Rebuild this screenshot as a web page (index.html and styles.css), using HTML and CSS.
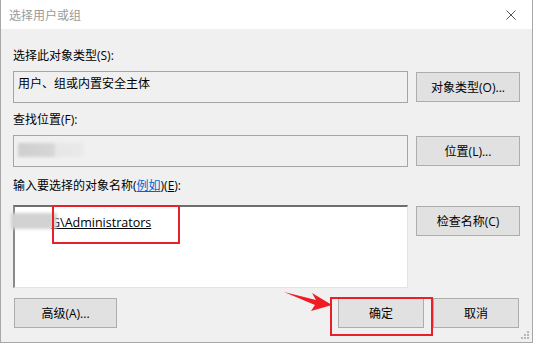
FILE: index.html
```html
<!DOCTYPE html>
<html lang="zh-CN">
<head>
    <meta charset="UTF-8">
    <title>选择用户或组</title>
    <link rel="stylesheet" href="styles.css">
</head>
<body>
    <div class="window">
        <div class="titlebar">
            <span class="title">选择用户或组</span>
            <svg class="close" width="10" height="10" viewBox="0 0 10 10">
                <path d="M0.5 0.5 L9.5 9.5 M9.5 0.5 L0.5 9.5" stroke="#555" stroke-width="1" fill="none"/>
            </svg>
        </div>

        <div class="content">
            <div class="label first">选择此对象类型(S):</div>
            <div class="row">
                <div class="field">用户、组或内置安全主体</div>
                <button class="btn">对象类型(O)...</button>
            </div>

            <div class="label second">查找位置(F):</div>
            <div class="row">
                <div class="field"><span class="blur-box"></span></div>
                <button class="btn">位置(L)...</button>
            </div>

            <div class="label third">输入要选择的对象名称(<a class="link">例如</a>)(<u>E</u>):</div>
            <div class="row top">
                <div class="names">
                    <span class="names-text">G\Administrators</span>
                </div>
                <button class="btn">检查名称(C)</button>
            </div>

            <div class="footer">
                <button class="btn">高级(A)...</button>
                <div class="footer-right">
                    <button class="btn small">确定</button>
                    <button class="btn small">取消</button>
                </div>
            </div>
        </div>

        <span class="blur-name"></span>
        <span class="mark mark-name"></span>
        <span class="mark mark-ok"></span>
        <svg class="arrow" width="52" height="22" viewBox="0 0 52 22">
            <path d="M0 2 L32 10 L28 3 L48 15 L27 21 L31 15 Z" fill="#ee1c25"/>
        </svg>
        <div class="grip">
            <i></i><i></i><i></i><i></i><i></i><i></i>
        </div>
    </div>
</body>
</html>
```

FILE: styles.css
```css
* {
    margin: 0;
    padding: 0;
    box-sizing: border-box;
}

body {
    font-family: "Open Sans", "Noto Sans CJK SC", sans-serif;
    font-size: 12px;
    color: #000;
    background: #fff;
}

.window {
    position: relative;
    width: 533px;
    height: 343px;
    border: 1px solid #a8a8a8;
    border-top: none;
    background: #f0f0f0;
    display: flex;
    flex-direction: column;
    overflow: hidden;
}

.titlebar {
    height: 29px;
    background: #fff;
    display: flex;
    align-items: center;
    justify-content: space-between;
    padding: 0 16px 0 8px;
}

.title {
    color: #9a9a9a;
    font-size: 12px;
}

.content {
    padding: 0 12px;
    display: flex;
    flex-direction: column;
}

.label {
    height: 16px;
    line-height: 16px;
}

.label.first {
    margin-top: 19px;
    margin-bottom: 7px;
}

.label.second {
    margin-top: 9px;
    margin-bottom: 7px;
}

.label.third {
    margin-top: 11px;
    margin-bottom: 11px;
}

.link {
    color: #0066cc;
    text-decoration: underline;
}

.row {
    display: flex;
    align-items: center;
    gap: 8px;
}

.row.top {
    align-items: flex-start;
}

.field {
    flex: 1;
    height: 32px;
    border: 1px solid #a5a5a5;
    background: #f0f0f0;
    padding: 4px 4px;
    line-height: 16px;
}

.blur-box {
    display: block;
    width: 66px;
    height: 14px;
    margin-top: 3px;
    background: linear-gradient(90deg, #cfcfcf 0, #d6d6d6 55%, #e6e6e6 56%, #eaeaea 100%);
    filter: blur(1.5px);
}

.names {
    flex: 1;
    height: 83px;
    background: #fff;
    border-top: 2px solid #6e6e6e;
    border-left: 2px solid #8a8a8a;
    border-right: 1px solid #e3e3e3;
    border-bottom: 1px solid #e3e3e3;
    padding: 8px 0 0 36px;
    line-height: 16px;
    margin-bottom: 10px;
}

.names-text {
    font-size: 12.5px;
    text-decoration: underline;
}

.btn {
    width: 104px;
    height: 30px;
    background: #e1e1e1;
    border: 1px solid #adadad;
    font-family: inherit;
    font-size: 12px;
    color: #000;
}

.row.top .btn {
    margin-top: 1px;
}

.footer {
    display: flex;
    justify-content: space-between;
    align-items: center;
    padding-left: 1px;
    padding-right: 1px;
}

.footer .btn {
    width: 103px;
}

.footer-right {
    display: flex;
    gap: 9px;
}

.footer .btn.small {
    width: 86px;
}

/* overlays */
.blur-name {
    position: absolute;
    left: 10px;
    top: 213px;
    width: 46px;
    height: 16px;
    background: #d2d2d2;
    filter: blur(1.5px);
}

.mark {
    position: absolute;
    border: 2px solid #e8202a;
}

.mark-name {
    left: 51px;
    top: 205px;
    width: 128px;
    height: 39px;
}

.mark-ok {
    left: 329px;
    top: 297px;
    width: 103px;
    height: 39px;
}

.arrow {
    position: absolute;
    left: 283px;
    top: 290px;
}

.grip {
    position: absolute;
    right: 3px;
    bottom: 3px;
    width: 9px;
    height: 9px;
}

.grip i {
    position: absolute;
    width: 2px;
    height: 2px;
    background: #b8b8b8;
}

.grip i:nth-child(1) { right: 0; bottom: 0; }
.grip i:nth-child(2) { right: 3px; bottom: 0; }
.grip i:nth-child(3) { right: 6px; bottom: 0; }
.grip i:nth-child(4) { right: 0; bottom: 3px; }
.grip i:nth-child(5) { right: 3px; bottom: 3px; }
.grip i:nth-child(6) { right: 0; bottom: 6px; }
```
